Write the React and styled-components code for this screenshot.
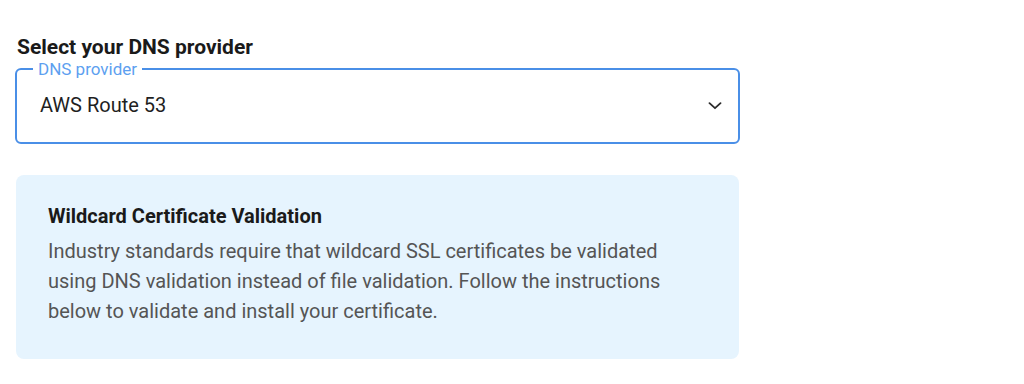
import styled, { createGlobalStyle } from "styled-components";

const GlobalStyle = createGlobalStyle`
  body {
    margin: 0;
    background: #ffffff;
    font-family: Roboto, "Liberation Sans", sans-serif;
  }
`;

export default function App() {
  return (
    <>
      <GlobalStyle />
      <Page>
        <Heading>Select your DNS provider</Heading>
        <SelectField>
          <Legend>DNS provider</Legend>
          <SelectRow>
            <Value>AWS Route 53</Value>
            <Chevron viewBox="0 0 14 8">
              <path d="M1.5 1.2l5.5 5 5.5-5" />
            </Chevron>
          </SelectRow>
        </SelectField>
        <InfoBox>
          <InfoTitle>Wildcard Certificate Validation</InfoTitle>
          <InfoText>
            Industry standards require that wildcard SSL certificates be
            validated using DNS validation instead of file validation. Follow
            the instructions below to validate and install your certificate.
          </InfoText>
        </InfoBox>
      </Page>
    </>
  );
}

const Page = styled.div`
  display: flex;
  flex-direction: column;
  width: 725px;
  padding: 34px 0 0 15px;
`;

const Heading = styled.h2`
  margin: 0 0 1px 2px;
  font-size: 21px;
  font-weight: 700;
  color: #1a1a1a;
  line-height: 26px;
`;

const SelectField = styled.fieldset`
  margin: 0;
  padding: 0 16px 0 23px;
  height: 83px;
  box-sizing: border-box;
  border: 2px solid #4a8fe7;
  border-radius: 6px;
`;

const Legend = styled.legend`
  margin-left: -7px;
  padding: 0 5px;
  font-size: 17px;
  line-height: 16px;
  color: #5d9ff0;
`;

const SelectRow = styled.div`
  display: flex;
  align-items: center;
  justify-content: space-between;
  height: 56px;
`;

const Value = styled.span`
  font-size: 20px;
  color: #1f1f1f;
`;

const Chevron = styled.svg`
  width: 14px;
  height: 8px;
  margin-top: 2px;
  fill: none;
  stroke: #2b2b2b;
  stroke-width: 1.8;
  stroke-linecap: round;
  stroke-linejoin: round;
`;

const InfoBox = styled.div`
  margin-top: 31px;
  margin-left: 1px;
  width: 723px;
  box-sizing: border-box;
  padding: 29px 32px 33px;
  background: #e6f4fe;
  border-radius: 8px;
`;

const InfoTitle = styled.h3`
  margin: 0 0 8px;
  font-size: 20px;
  font-weight: 700;
  line-height: 24px;
  color: #1a1a1a;
`;

const InfoText = styled.p`
  margin: 0;
  font-size: 20px;
  line-height: 30px;
  color: #555555;
  max-width: 640px;
`;
